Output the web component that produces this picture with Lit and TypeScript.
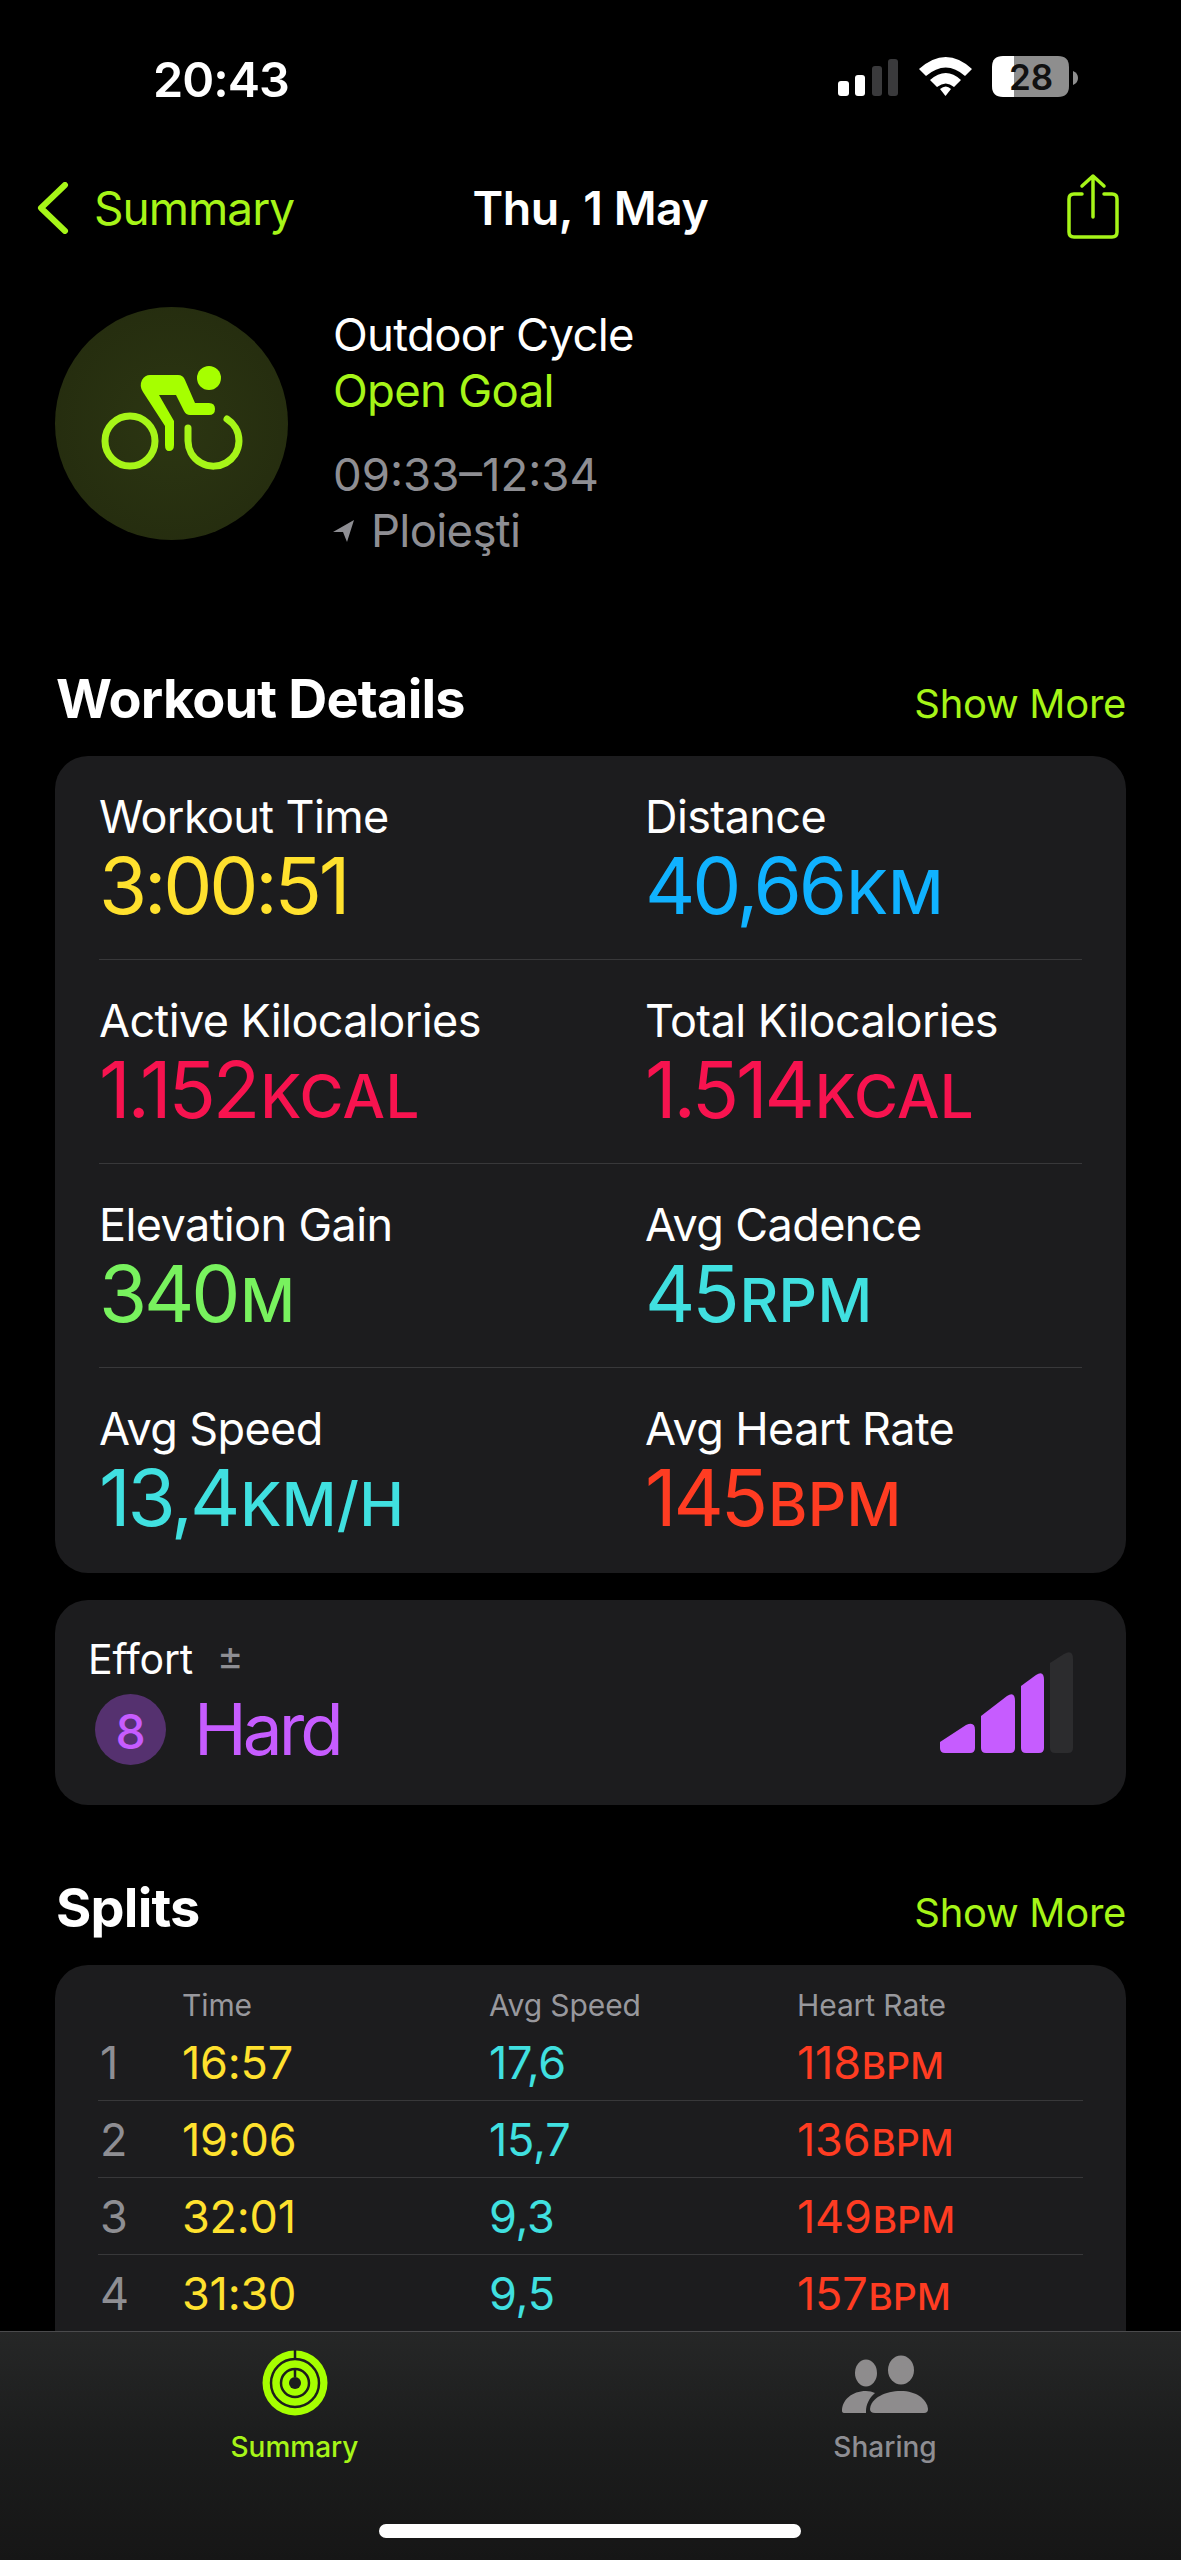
import { LitElement, html, css, svg } from "lit";
import { customElement } from "lit/decorators.js";

const metrics = [
  ["Workout Time", "3:00:51", "", "yellow"],
  ["Distance", "40,66", "KM", "blue"],
  ["Active Kilocalories", "1.152", "KCAL", "pink"],
  ["Total Kilocalories", "1.514", "KCAL", "pink"],
  ["Elevation Gain", "340", "M", "green"],
  ["Avg Cadence", "45", "RPM", "cyan"],
  ["Avg Speed", "13,4", "KM/H", "cyan"],
  ["Avg Heart Rate", "145", "BPM", "red"],
];
const splits = [
  ["1", "16:57", "17,6", "118"],
  ["2", "19:06", "15,7", "136"],
  ["3", "32:01", "9,3", "149"],
  ["4", "31:30", "9,5", "157"],
];

@customElement("app-root")
export class AppRoot extends LitElement {
  static styles = css`
    :host { display: block; width: 1181px; height: 2560px; background: #000; color: #fff; position: relative; overflow: hidden; font-family: Inter, "Liberation Sans", sans-serif; }
    svg { display: block; }
    .status { height: 160px; box-sizing: border-box; padding: 56px 0 0 153px; display: flex; }
    .time { font-size: 48.500px; line-height: 48px; font-weight: 600; letter-spacing: -1px; width: 685px; }
    .nav { height: 95px; display: grid; grid-template-columns: 1fr auto 1fr; align-items: center; padding: 0 62px; }
    .back { display: flex; align-items: center; gap: 25px; color: #a6f518; font-size: 46px; letter-spacing: -1px; margin-left: -26px; }
    .title { font-size: 46.500px; font-weight: 600; letter-spacing: -0.5px; }
    .share { justify-self: end; margin-top: -3px; }
    .head { display: flex; margin-top: 52px; padding-left: 55px; gap: 45px; }
    .disc { width: 233px; height: 233px; border-radius: 50%; background: radial-gradient(circle at 50% 50%, #2c3612, #232a0e); flex: none; }
    .info { font-size: 45.500px; line-height: 56px; letter-spacing: -0.7px; }
    .info .goal { color: #a6f518; }
    .info .gray { color: #8e8e93; }
    .info .t { margin-top: 28px; letter-spacing: 0; }
    .place { display: flex; align-items: center; gap: 17px; }
    .sec { display: flex; justify-content: space-between; align-items: center; padding: 0 55px 0 56px; }
    .sec h2 { margin: 0; font-size: 54px; font-weight: 700; letter-spacing: -0.8px; line-height: 60px; }
    .sec span { color: #a6f518; font-size: 40px; letter-spacing: -0.3px; position: relative; top: 4px; }
    .s1 { margin-top: 110px; }
    .card { background: #1c1c1e; border-radius: 33px; margin: 0 55px; }
    .metrics { margin-top: 27px; height: 817px; box-sizing: border-box; padding: 0 44px; }
    .mrow { height: 204px; box-sizing: border-box; display: grid; grid-template-columns: 546px 1fr; padding-top: 36px; border-bottom: 1px solid #38383a; }
    .mrow:last-child { border: 0; }
    .lab { font-size: 45px; line-height: 50px; letter-spacing: -0.6px; }
    .val { font-size: 78px; line-height: 88px; letter-spacing: -3.200px; white-space: nowrap; }
    .val small { font-size: 60px; font-weight: 500; letter-spacing: 0.3px; margin-left: 3px; }
    .yellow { color: #ffe12e; } .blue { color: #10b2ff; } .pink { color: #f7134f; } .green { color: #78f25e; } .cyan { color: #40e0e0; } .red { color: #ff3c22; } .lime { color: #a6f518; }
    .effort { margin-top: 27px; height: 205px; box-sizing: border-box; padding: 35px 53px 0 33px; display: flex; justify-content: space-between; }
    .ef-l { display: flex; align-items: center; gap: 24px; font-size: 41px; line-height: 48px; letter-spacing: -0.2px; }
    .ef-l span { color: #8e8e93; font-size: 40px; position: relative; top: -3px; }
    .ef-v { display: flex; align-items: center; gap: 28px; margin: 8px 0 0 7px; color: #c65cff; font-size: 71px; line-height: 76px; letter-spacing: -4px; }
    .badge { width: 71px; height: 71px; border-radius: 50%; background: #55316f; display: grid; place-items: center; font-size: 48px; font-weight: 500; letter-spacing: 0; }
    .bars { margin-top: 17px; }
    .s2 { margin-top: 73px; }
    .splits { margin-top: 27px; height: 500px; box-sizing: border-box; padding: 20px 43px 0; }
    .srow { display: grid; grid-template-columns: 84px 307px 308px 1fr; height: 77px; align-items: center; box-sizing: border-box; border-bottom: 1px solid #38383a; font-size: 45px; letter-spacing: -0.2px; }
    .srow.hd { height: 39px; border: 0; font-size: 30px; color: #98989d; letter-spacing: -0.1px; }
    .srow.first { height: 77px; }
    .n { color: #8e8e93; padding-left: 2px; }
    .srow small { font-size: 37px; font-weight: 500; letter-spacing: 0.2px; margin-left: 1px; }
    .tabbar { position: absolute; left: 0; right: 0; bottom: 0; height: 229px; box-sizing: border-box; border-top: 1px solid #4a4a4c; display: grid; grid-template-columns: 589px 1fr; background: linear-gradient(180deg, #262727 0%, #1c1d1d 45%, #161616 100%); }
    .tab { display: flex; flex-direction: column; align-items: center; padding-top: 18px; font-size: 28px; font-weight: 500; color: #8e8e93; }
    .tab svg { height: 66px; margin-bottom: 14px; }
    .tab.on { color: #a6f518; }
    .tab.two { width: 590px; box-sizing: border-box; margin-left: 1px; }
    .home { position: absolute; left: 379px; bottom: 22px; width: 422px; height: 14px; border-radius: 7px; background: #fff; }
  `;

  bike() {
    return svg`<svg width="233" height="233" viewBox="0 0 233 233">
      <g transform="translate(-57 -307)">
        <circle cx="132" cy="441" r="25" fill="none" stroke="#a6f518" stroke-width="7"/>
        <path d="M190 428 V441 A25.500 25.500 0 1 0 229 419" fill="none" stroke="#a6f518" stroke-width="7" stroke-linecap="round"/>
        <circle cx="211" cy="378" r="12" fill="#a6ff00"/>
        <path d="M152 375 H180 Q185 375 187 380 L197 403 H211 Q217 403 217 409 Q217 415 211 415 H192 Q188 415 186 411 L178 395 H161 L176 421 V445 Q176 451 171 451 Q167 451 167 445 V426 L145 392 Q141 386 144 380 Q147 375 152 375 Z" fill="#a6ff00"/>
      </g></svg>`;
  }

  render() {
    return html`
      <div class="status">
        <div class="time">20:43</div>
        <svg width="240" height="46" viewBox="838 58 240 46">
          <g fill="#fff"><rect x="838" y="83" width="11" height="15" rx="3"/><rect x="855" y="77" width="10" height="21" rx="3"/></g>
          <g fill="#3a3a3c"><rect x="872" y="68" width="10" height="30" rx="3"/><rect x="888" y="61" width="10" height="37" rx="3"/></g>
          <g fill="#fff">
            <path d="M919 71 Q946 47 972 71 L965 78 Q946 61 926 78 Z"/>
            <path d="M930 82 Q946 68 961 82 L954 89 Q946 82 937 89 Z"/>
            <path d="M940 91 Q946 86 951 91 L945.500 98 Z"/>
            <path d="M1014 58 H1003 Q992 58 992 69 V88 Q992 99 1003 99 H1014 Z"/>
          </g>
          <path d="M1014 58 H1058 Q1069 58 1069 69 V88 Q1069 99 1058 99 H1014 Z" fill="#8e8e8e"/>
          <path d="M1073 73 Q1078 75 1078 80 Q1078 85 1073 87 Z" fill="#8e8e8e"/>
          <text x="1031" y="92" text-anchor="middle" font-family="Inter" font-weight="600" font-size="35" fill="#111">28</text>
        </svg>
      </div>
      <div class="nav">
        <div class="back">
          <svg width="33" height="52" viewBox="0 0 33 52"><path d="M29 3 L5 26 L29 49" fill="none" stroke="#a6f518" stroke-width="6" stroke-linecap="round" stroke-linejoin="round"/></svg>
          Summary
        </div>
        <div class="title">Thu, 1 May</div>
        <svg class="share" width="52" height="66" viewBox="0 0 52 66"><path d="M15 21 H7 Q2 21 2 26 V59 Q2 64 7 64 H45 Q50 64 50 59 V26 Q50 21 45 21 H37 M26 44 V3 M15 13 L26 3 L37 13" fill="none" stroke="#a6f518" stroke-width="3.500" stroke-linecap="round" stroke-linejoin="round"/></svg>
      </div>
      <div class="head">
        <div class="disc">${this.bike()}</div>
        <div class="info">
          <div>Outdoor Cycle</div>
          <div class="goal">Open Goal</div>
          <div class="gray t">09:33–12:34</div>
          <div class="gray place">
            <svg width="21" height="22" viewBox="0 0 21 22"><path d="M21 0 L14 22 L10 12 L0 12 Z" fill="#8e8e93"/></svg>
            Ploieşti
          </div>
        </div>
      </div>
      <div class="sec s1"><h2>Workout Details</h2><span>Show More</span></div>
      <div class="card metrics">
        ${[0, 2, 4, 6].map((i) => html`<div class="mrow">
          ${metrics.slice(i, i + 2).map((m) => html`<div>
            <div class="lab">${m[0]}</div>
            <div class="val ${m[3]}">${m[1]}${m[2] ? html`<small>${m[2]}</small>` : ""}</div>
          </div>`)}
        </div>`)}
      </div>
      <div class="card effort">
        <div>
          <div class="ef-l">Effort <span>±</span></div>
          <div class="ef-v"><div class="badge">8</div>Hard</div>
        </div>
        <svg class="bars" width="133" height="101" viewBox="939 1653 133 101">
          <g fill="#c65cff">
            <path d="M939 1743 L965 1726 Q974 1722 974 1731 V1749 Q974 1754 969 1754 H944 Q939 1754 939 1749 Z"/>
            <path d="M980 1717 L1006 1697 Q1014 1692 1014 1702 V1749 Q1014 1754 1009 1754 H985 Q980 1754 980 1749 Z"/>
            <path d="M1020 1687 L1035 1676 Q1043 1671 1043 1681 V1749 Q1043 1754 1038 1754 H1025 Q1020 1754 1020 1749 Z"/>
          </g>
          <path d="M1049 1664 L1063 1655 Q1072 1650 1072 1660 V1749 Q1072 1754 1067 1754 H1054 Q1049 1754 1049 1749 Z" fill="#2c2c2e"/>
        </svg>
      </div>
      <div class="sec s2"><h2>Splits</h2><span>Show More</span></div>
      <div class="card splits">
        <div class="srow hd"><div></div><div>Time</div><div>Avg Speed</div><div>Heart Rate</div></div>
        ${splits.map((s) => html`<div class="srow">
          <div class="n">${s[0]}</div>
          <div class="yellow">${s[1]}</div>
          <div class="cyan">${s[2]}</div>
          <div class="red">${s[3]}<small>BPM</small></div>
        </div>`)}
      </div>
      <div class="tabbar">
        <div class="tab on">
          <svg width="66" height="66" viewBox="0 0 66 66">
            <circle cx="33" cy="33" r="32.500" fill="#a6ff00"/>
            <circle cx="33" cy="33" r="24" fill="none" stroke="#1c1d1d" stroke-width="2.500"/>
            <circle cx="33" cy="33" r="14" fill="none" stroke="#1c1d1d" stroke-width="2.500"/>
            <circle cx="33" cy="33" r="6" fill="#1c1d1d"/>
            <path d="M33 0 V9 M33 19 V27" stroke="#1c1d1d" stroke-width="2.500"/>
          </svg>
          Summary
        </div>
        <div class="tab two">
          <svg width="86" height="66" viewBox="0 0 86 66">
            <g fill="#8e8c8d">
              <ellipse cx="24" cy="23" rx="11" ry="13.500"/>
              <ellipse cx="59" cy="20" rx="13" ry="14.500"/>
              <path d="M0 61 C0 50 10 41 24 41 Q29 41 33 43 C27 48 24 55 24 61 V63 H3 Q0 63 0 61 Z"/>
              <path d="M33 63 Q28 63 28 59 C29 48 43 41 59 41 C74 41 85 49 86 59 Q86 63 82 63 Z"/>
            </g>
          </svg>
          Sharing
        </div>
        <div class="home"></div>
      </div>
    `;
  }
}
